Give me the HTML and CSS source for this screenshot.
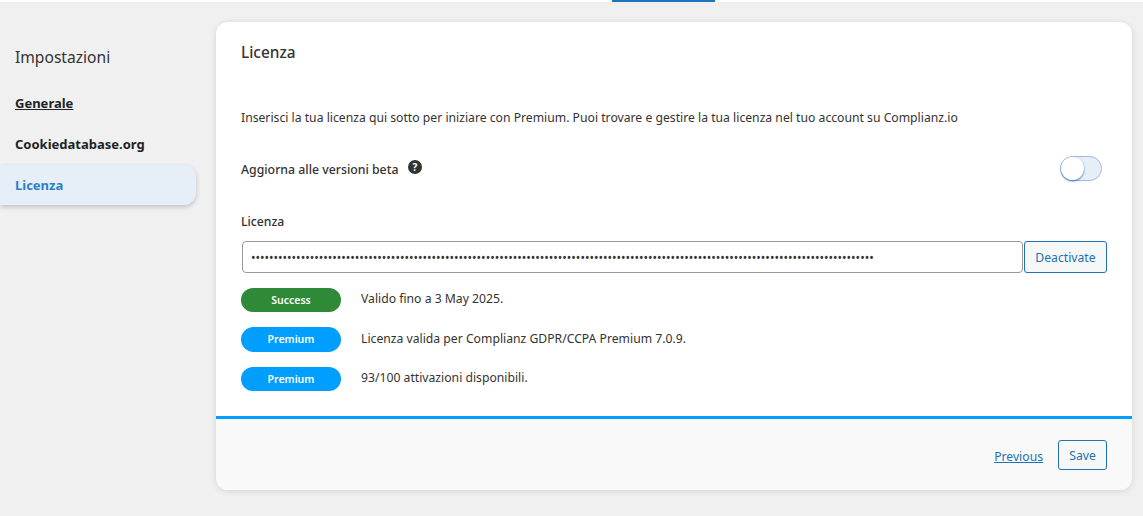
FILE: index.html
```html
<!DOCTYPE html>
<html lang="it">
<head>
    <meta charset="UTF-8">
    <title>Licenza</title>
    <link rel="stylesheet" href="styles.css">
</head>
<body>
<div class="topbar">
    <div class="topbar-tab"></div>
</div>

<div class="wrap">
    <div class="menu">
        <h2 class="menu-title">Impostazioni</h2>
        <a class="menu-item menu-current" href="#">Generale</a>
        <a class="menu-item" href="#">Cookiedatabase.org</a>
        <a class="menu-item menu-active" href="#">Licenza</a>
    </div>

    <div class="card">
        <div class="card-head">
            <h3>Licenza</h3>
        </div>

        <div class="card-body">
            <p class="intro">Inserisci la tua licenza qui sotto per iniziare con Premium. Puoi trovare e gestire la tua licenza nel tuo account su Complianz.io</p>

            <div class="beta">
                <span class="beta-label">Aggiorna alle versioni beta</span>
                <svg class="help" width="14" height="14" viewBox="0 0 14 14">
                    <circle cx="7" cy="7" r="7" fill="#333"/>
                    <text x="7" y="10.5" text-anchor="middle" font-size="10" font-weight="700" font-family="Noto Sans" fill="#fff">?</text>
                </svg>
                <span class="toggle"><span class="knob"></span></span>
            </div>

            <label class="field-label" for="licenza">Licenza</label>
            <div class="field">
                <input class="field-input" id="licenza" type="password" value="xxxxxxxxxxxxxxxxxxxxxxxxxxxxxxxxxxxxxxxxxxxxxxxxxxxxxxxxxxxxxxxxxxxxxxxxxxxxxxxxxxxxxxxxxxxxxxxxxxxxxxxxxxxxxxxxxxxxxxxxxxxxxxxxxxxxxxxxxx">
                <button class="btn btn-deactivate">Deactivate</button>
            </div>

            <div class="notice">
                <span class="badge badge-success">Success</span>
                <span class="notice-text">Valido fino a 3 May 2025.</span>
            </div>
            <div class="notice notice-tall">
                <span class="badge badge-premium">Premium</span>
                <span class="notice-text">Licenza valida per Complianz GDPR/CCPA Premium 7.0.9.</span>
            </div>
            <div class="notice">
                <span class="badge badge-premium">Premium</span>
                <span class="notice-text">93/100 attivazioni disponibili.</span>
            </div>
        </div>

        <div class="card-foot">
            <a class="prev" href="#">Previous</a>
            <button class="btn btn-save">Save</button>
        </div>
    </div>
</div>
</body>
</html>
```

FILE: styles.css
```css
* {
    box-sizing: border-box;
}

body {
    margin: 0;
    height: 516px;
    overflow: hidden;
    background: #f0f0f1;
    color: #333;
    font-family: "Noto Sans", "Open Sans", sans-serif;
    font-size: 12.2px;
}

.topbar {
    height: 2px;
    background: #fff;
    padding-left: 612px;
}

.topbar-tab {
    width: 103px;
    height: 2px;
    background: #1e73be;
}

.wrap {
    display: flex;
    gap: 20px;
    padding: 20px 11px 0 0;
}

.menu {
    width: 196px;
    padding-top: 23px;
}

.menu-title {
    margin: 0 0 14px 15px;
    font-size: 15.6px;
    font-weight: 400;
    line-height: 24px;
    color: #333;
}

.menu-item {
    display: block;
    height: 41px;
    padding-left: 15px;
    line-height: 40px;
    font-size: 13px;
    font-weight: 700;
    color: #1d2327;
    text-decoration: none;
}

.menu-current {
    text-decoration: underline;
}

.menu-active {
    height: 40px;
    color: #2b7fc9;
    background: #e6eff8;
    border-radius: 0 12px 12px 0;
    box-shadow: 0 2px 5px rgba(0, 0, 0, 0.2);
}

.card {
    width: 916px;
    height: 468px;
    display: flex;
    flex-direction: column;
    background: #fff;
    border-radius: 12px;
    box-shadow: 0 1px 6px rgba(0, 0, 0, 0.12);
    overflow: hidden;
}

.card-head {
    height: 84px;
    padding: 19px 25px 0;
}

.card-head h3 {
    margin: 0;
    font-size: 15.4px;
    font-weight: 500;
    line-height: 24px;
}

.card-body {
    flex: 1;
    padding: 0 25px;
}

.intro {
    margin: 1px 0 0;
    line-height: 22px;
}

.beta {
    display: flex;
    align-items: center;
    height: 30px;
    margin-top: 25px;
}

.beta-label {
    font-size: 12.3px;
    font-weight: 500;
}

.help {
    margin: -4px 0 0 10px;
}

.toggle {
    margin: -2px 5px 0 auto;
    width: 42px;
    height: 25px;
    background: #e6eff8;
    border: 1px solid #a6b5dc;
    border-radius: 13px;
}

.knob {
    display: block;
    width: 23px;
    height: 23px;
    background: #fff;
    border-radius: 50%;
    box-shadow: 0 1px 2px #2f74bb;
}

.field-label {
    display: block;
    margin-top: 27px;
    font-weight: 500;
    line-height: 22px;
}

.field {
    display: flex;
    gap: 1px;
    margin-top: 8px;
    padding-left: 1px;
}

.field-input {
    width: 781px;
    height: 32px;
    padding: 0 8px;
    border: 1px solid #999;
    border-radius: 4px;
    color: #333;
    font-family: inherit;
    font-size: 12px;
    outline: none;
}

.btn {
    background: #f6f7f7;
    border: 1px solid #2271b1;
    border-radius: 3px;
    color: #2271b1;
    font-family: inherit;
    font-size: 12.2px;
}

.btn-deactivate {
    width: 83px;
    height: 32px;
}

.notice {
    display: flex;
    align-items: center;
    gap: 20px;
    height: 24px;
    margin-top: 15px;
}

.notice-tall {
    height: 25px;
}

.notice-text {
    padding-bottom: 3px;
}

.badge {
    width: 100px;
    height: 100%;
    border-radius: 13px;
    color: #fff;
    font-size: 10.5px;
    font-weight: 600;
    line-height: 24px;
    text-align: center;
}

.badge-success {
    background: #2e8a37;
}

.badge-premium {
    background: #009fff;
}

.card-foot {
    height: 74px;
    display: flex;
    align-items: center;
    justify-content: flex-end;
    gap: 15px;
    padding: 0 25px;
    background: #f9f9f9;
    border-top: 3px solid #009fff;
}

.prev {
    margin-top: 3px;
    color: #2271b1;
}

.btn-save {
    width: 49px;
    height: 30px;
    padding-top: 2px;
}
```
